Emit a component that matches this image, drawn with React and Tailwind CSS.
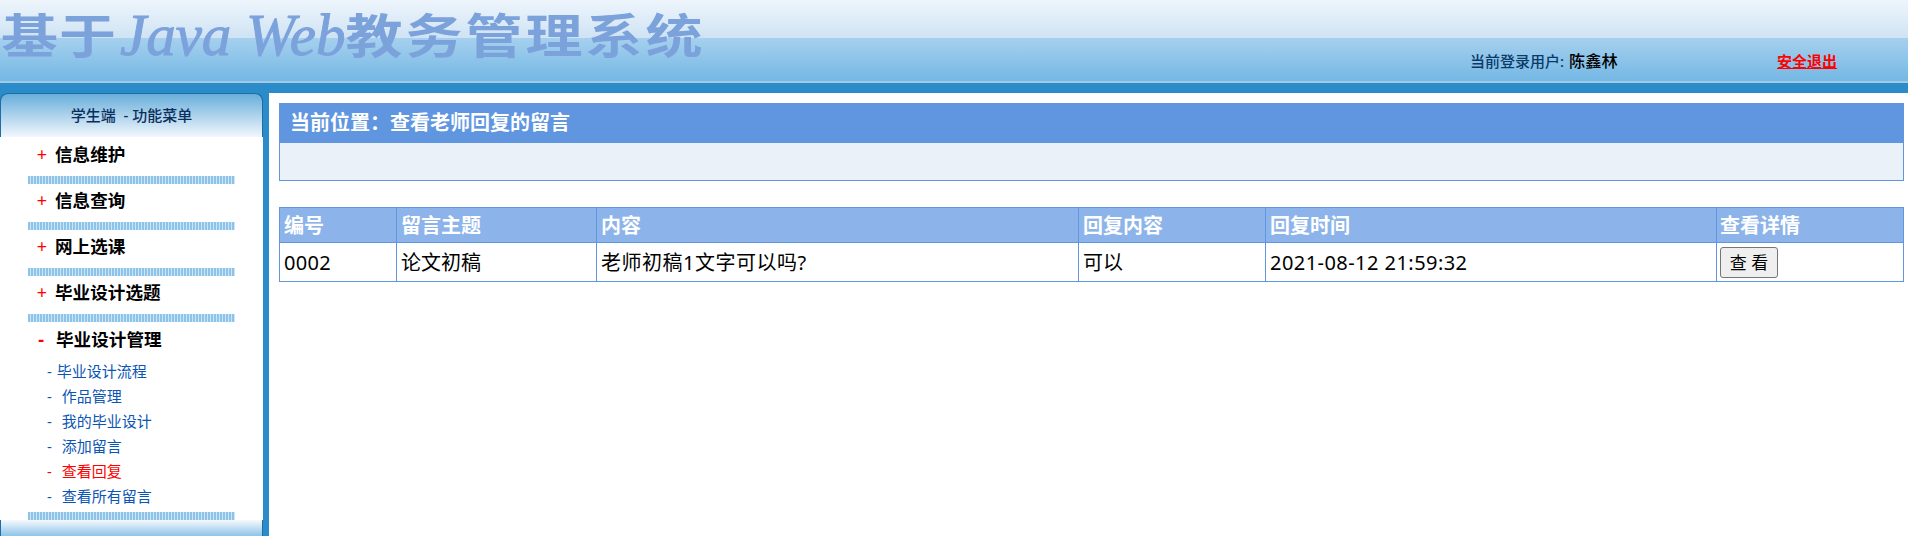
import React from 'react';

const font = 'font-["Noto_Sans","Noto_Sans_CJK_SC",sans-serif]';

const closedMenus = ['信息维护', '信息查询', '网上选课', '毕业设计选题'];

const subMenus = [
  { name: '毕业设计流程', gap: 'ml-[5px]' },
  { name: '作品管理', gap: 'ml-[10px]' },
  { name: '我的毕业设计', gap: 'ml-[10px]' },
  { name: '添加留言', gap: 'ml-[10px]' },
  { name: '查看回复', gap: 'ml-[10px]', active: true },
  { name: '查看所有留言', gap: 'ml-[10px]' },
];

const columns = [
  { title: '编号', value: '0002', width: 'w-[117px]', extra: 'tracking-[0.3px]' },
  { title: '留言主题', value: '论文初稿', width: 'w-[200px]', extra: '' },
  { title: '内容', value: '老师初稿1文字可以吗?', width: 'w-[482px]', extra: 'tracking-[0.5px]' },
  { title: '回复内容', value: '可以', width: 'w-[187px]', extra: '' },
  { title: '回复时间', value: '2021-08-12 21:59:32', width: 'w-[451px]', extra: 'tracking-[0.45px]' },
];

function Separator() {
  return <div className="ml-[28px] w-[207px] h-[8px] bg-[repeating-linear-gradient(90deg,#8cc3e8_0px,#8cc3e8_2px,#cfe5f5_2px,#cfe5f5_3px)]" />;
}

function MenuTitle({ name, open }) {
  return (
    <div className={`flex items-center h-[38px] ${open ? 'pb-[3px]' : 'pb-[5px]'}`}>
      <span className={`text-[#ff0000] text-[18px] w-[55px] text-right ${open ? 'font-bold pr-[11px]' : 'pr-[8px]'}`}>{open ? '-' : '+'}</span>
      <span className={`text-[17.6px] font-bold text-black ${open ? 'ml-[1px]' : ''}`}>{name}</span>
    </div>
  );
}

export default function App() {
  return (
    <div className={`h-[536px] overflow-hidden flex flex-col bg-[#2b8cc9] ${font}`}>
      <div className="h-[83px] relative shrink-0 border-b-2 border-[#a5c9e0] bg-[linear-gradient(180deg,#eef5fc_0px,#cfe3f4_38px,#a6d0ee_38px,#74b8e4_81px)]">
        <div className="flex items-center h-[70px] pl-[1px] text-[#7ca2dc] font-bold whitespace-nowrap">
          <span className="text-[57px] tracking-[1px] leading-none scale-y-[0.82]">基于</span>
          <span className='text-[59px] italic font-normal leading-none font-["Liberation_Serif",serif] ml-[3px] [-webkit-text-stroke:1px_#7ca2dc]'>Java Web</span>
          <span className="text-[57px] tracking-[3px] leading-none scale-y-[0.82]">教务管理系统</span>
        </div>
        <div className="absolute left-[1470px] top-[49px] flex items-center text-[15px] leading-[24px] font-medium text-[#0b3a6a]">
          <span>当前登录用户:</span>
          <span className="ml-[5px] text-[16.2px] text-black">陈鑫林</span>
        </div>
        <a href="#" className="absolute left-[1777px] top-[49px] text-[15px] leading-[24px] font-bold text-[#ff0000] underline">安全退出</a>
      </div>

      <div className="flex flex-1 pt-[10px] min-h-0">
        <div className="w-[263px] shrink-0 flex flex-col">
          <div className="h-[44px] rounded-t-[8px] border-t border-x border-[#1a6fa5] bg-[linear-gradient(180deg,#68aedb_0px,#f5f9fd_44px)] text-center text-[15px] leading-[42px] font-medium text-[#0b2f5c] whitespace-pre">
            学生端  - 功能菜单
          </div>
          <div className="bg-white flex-1 flex flex-col pt-[1px]">
            {closedMenus.map(name => (
              <div key={name}>
                <MenuTitle name={name} />
                <Separator />
              </div>
            ))}
            <MenuTitle name="毕业设计管理" open />
            <div className="flex flex-col pl-[47px] pb-[3px] -mt-[1px]">
              {subMenus.map(item => (
                <div key={item.name} className={`flex items-center h-[25px] text-[15px] ${item.active ? 'text-[#ff0000]' : 'text-[#0b55b5]'}`}>
                  <span>-</span>
                  <span className={item.gap}>{item.name}</span>
                </div>
              ))}
            </div>
            <Separator />
          </div>
          <div className="h-[16px] shrink-0 border-x border-[#1a6fa5] bg-[linear-gradient(180deg,#f5f9fd_0px,#8ec4e8_16px)]" />
        </div>

        <div className="flex-1 ml-[6px] bg-white pt-[10px] pl-[10px] pr-[4px]">
          <div className="border border-[#6096e0] bg-[#eaf1f9] h-[78px]">
            <div className="h-[39px] bg-[#6096e0] pl-[10px] text-[20px] font-bold leading-[38px] text-white">当前位置：查看老师回复的留言</div>
          </div>
          <table className="mt-[26px] w-full border-collapse table-fixed text-[20px]">
            <thead>
              <tr className="h-[35px] bg-[#8cb4ea]">
                {columns.map(col => (
                  <th key={col.title} className={`${col.width} border border-[#6096e0] px-[4px] pt-[1px] text-left font-bold text-white`}>{col.title}</th>
                ))}
                <th className="border border-[#6096e0] px-[3px] pt-[1px] text-left font-bold text-white">查看详情</th>
              </tr>
            </thead>
            <tbody>
              <tr className="h-[39px] text-black">
                {columns.map(col => (
                  <td key={col.title} className={`border border-[#6096e0] px-[4px] pt-[1px] ${col.extra}`}>{col.value}</td>
                ))}
                <td className="border border-[#6096e0] px-[3px]">
                  <button type="button" className="block w-[58px] h-[31px] bg-[#efefef] border border-[#767676] rounded-[3px] text-[17px] leading-none text-black">查 看</button>
                </td>
              </tr>
            </tbody>
          </table>
        </div>
      </div>
    </div>
  );
}
